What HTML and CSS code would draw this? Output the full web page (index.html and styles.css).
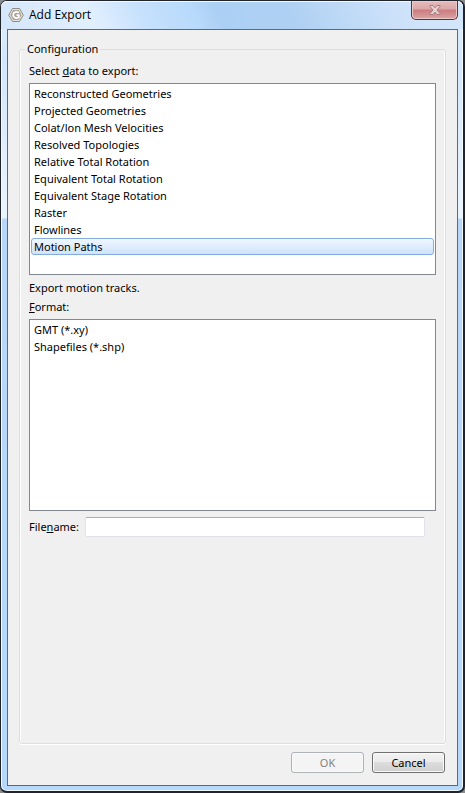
FILE: index.html
```html
<!DOCTYPE html>
<html lang="en">
<head>
<meta charset="utf-8">
<title>Add Export</title>
<link rel="stylesheet" href="styles.css">
</head>
<body>
<div class="window">
  <header class="titlebar">
    <svg class="app-icon" viewBox="0 0 16 16" aria-hidden="true">
      <path d="M4.500 1.500h7L15.300 8l-3.800 6.500h-7L.7 8z" fill="#e9e6e1" stroke="#8f8b83"/>
      <path d="M5.200 3h5.600L13.600 8l-2.800 5H5.200L2.400 8z" fill="#aaa297"/>
      <path d="M10.800 5.800C8.800 4.200 5.200 4.900 5.200 8s3.600 3.800 5.600 2.300V8.200H8.500" fill="none" stroke="#fff" stroke-width="1.800"/>
    </svg>
    <h1 class="title">Add Export</h1>
    <button class="close" type="button" aria-label="Close">
      <svg viewBox="0 0 12 10" aria-hidden="true">
        <path d="M1 .5h3l2 2.300 2-2.300h3v1L8 5l3 3.500v1H8L6 7.200 4 9.500H1v-1L4 5 1 1.500z" fill="#e6d2d3" stroke="#a8797d"/>
      </svg>
    </button>
  </header>
  <form class="client">
    <fieldset class="group">
      <legend>Configuration</legend>
      <label class="label" for="data">Select <u>d</u>ata to export:</label>
      <select class="list" id="data" size="11">
        <option>Reconstructed Geometries</option>
        <option>Projected Geometries</option>
        <option>Colat/lon Mesh Velocities</option>
        <option>Resolved Topologies</option>
        <option>Relative Total Rotation</option>
        <option>Equivalent Total Rotation</option>
        <option>Equivalent Stage Rotation</option>
        <option>Raster</option>
        <option>Flowlines</option>
        <option selected>Motion Paths</option>
      </select>
      <p class="label description">Export motion tracks.</p>
      <label class="label" for="format"><u>F</u>ormat:</label>
      <select class="list" id="format" size="11">
        <option>GMT (*.xy)</option>
        <option>Shapefiles (*.shp)</option>
      </select>
      <div class="file-row">
        <label for="filename">File<u>n</u>ame:</label>
        <input id="filename" type="text">
      </div>
    </fieldset>
    <div class="actions">
      <button class="button" type="button" disabled>OK</button>
      <button class="button" type="button">Cancel</button>
    </div>
  </form>
</div>
</body>
</html>
```
FILE: styles.css
```css
* {
  box-sizing: border-box;
}

body {
  margin: 0;
  background: #8a8d90;
  color: #000;
  font: 11px/14px "Noto Sans", sans-serif;
}

.window {
  display: flex;
  flex-direction: column;
  min-height: 100vh;
  padding: 0 5px 5px 6px;
  border: 1px solid #20242c;
  border-bottom-width: 2px;
  border-right-width: 2px;
  border-radius: 7px;
  background: linear-gradient(#e0effd 0, #d3e6fb 60px, #eaf4fe 217px, #b6d7f8 218px, #b6d9fb 100%);
  box-shadow: inset 0 0 0 1px #f2f9ff;
}

.titlebar {
  display: flex;
  align-items: center;
  height: 28px;
  margin: 0 -5px 0 -6px;
  padding: 0 5px 0 7px;
  border-radius: 6px 6px 0 0;
  background: linear-gradient(65deg, #d4e6fa 0, #e2f0fe 20%, #c4e0fc 32%, #b8dafb 42%, #acd0f3 47%, #aed0f3 62%, #cde2f9 85%, #d4e7fb 100%);
  box-shadow: inset 0 1px #f2f9ff;
}

.app-icon {
  width: 16px;
  height: 16px;
}

.title {
  flex: 1;
  margin: 0 0 0 5px;
  font: 12px/16px "Open Sans", sans-serif;
}

.close {
  display: flex;
  align-items: center;
  justify-content: center;
  align-self: flex-start;
  width: 47px;
  height: 19px;
  padding: 0;
  border: 1px solid #5f3038;
  border-top: 0;
  border-radius: 0 0 5px 5px;
  background: linear-gradient(#e5bcbc 0, #dca6a7 45%, #cc7b7d 50%, #dba5a5 100%);
  box-shadow: inset 0 0 0 1px #ecc9c9;
}

.close svg {
  width: 12px;
  height: 10px;
}

.client {
  display: flex;
  flex: 1;
  flex-direction: column;
  padding: 12px 11px;
  border: 1px solid #5b6b7a;
  background: #f0f0f0;
}

.group {
  flex: 1;
  min-width: 0;
  margin: 0;
  padding: 8px 9px;
  border: 1px solid #d5dfe5;
  border-radius: 3px;
  box-shadow: inset -1px 0 #fff, inset 1px 0 #fff, 0 1px #fff;
}

.group legend {
  margin-left: -4px;
  padding: 0 2px;
}

.label {
  display: block;
  margin: 0 0 5px;
}

.description {
  margin-top: 6px;
}

.list {
  display: block;
  width: 100%;
  height: 192px;
  padding: 1px;
  overflow: hidden;
  border: 1px solid #828790;
  border-radius: 0;
  outline: 0;
  background: #fff;
  color: #000;
  font: 11px/15px "Noto Sans", sans-serif;
}

.list option {
  height: 17px;
  min-height: 17px;
  padding: 0 2px;
  border: 1px solid transparent;
  border-radius: 3px;
  line-height: 15px;
}

.list option:checked {
  border-color: #84acdd;
  background: linear-gradient(#f0f7ff, #cfe3fc);
  color: #000;
}

.file-row {
  display: flex;
  align-items: center;
  gap: 6px;
  margin: 6px 11px 0 0;
}

.file-row input {
  flex: 1;
  min-width: 0;
  height: 20px;
  padding: 0 3px;
  border: 1px solid #e2e3ea;
  border-top-color: #abadb3;
  border-radius: 2px;
  background: #fff;
  font: inherit;
}

.actions {
  display: flex;
  justify-content: flex-end;
  gap: 8px;
  margin: 8px 1px 0;
}

.button {
  width: 73px;
  height: 21px;
  padding: 0;
  border: 1px solid #707070;
  border-radius: 3px;
  background: linear-gradient(#f2f2f2 0, #ebebeb 48%, #dddddd 50%, #cfcfcf 100%);
  box-shadow: inset 0 0 0 1px #fafafa;
  color: #000;
  font: inherit;
}

.button:disabled {
  border-color: #adb2b5;
  background: #f4f4f4;
  color: #838383;
}
```
